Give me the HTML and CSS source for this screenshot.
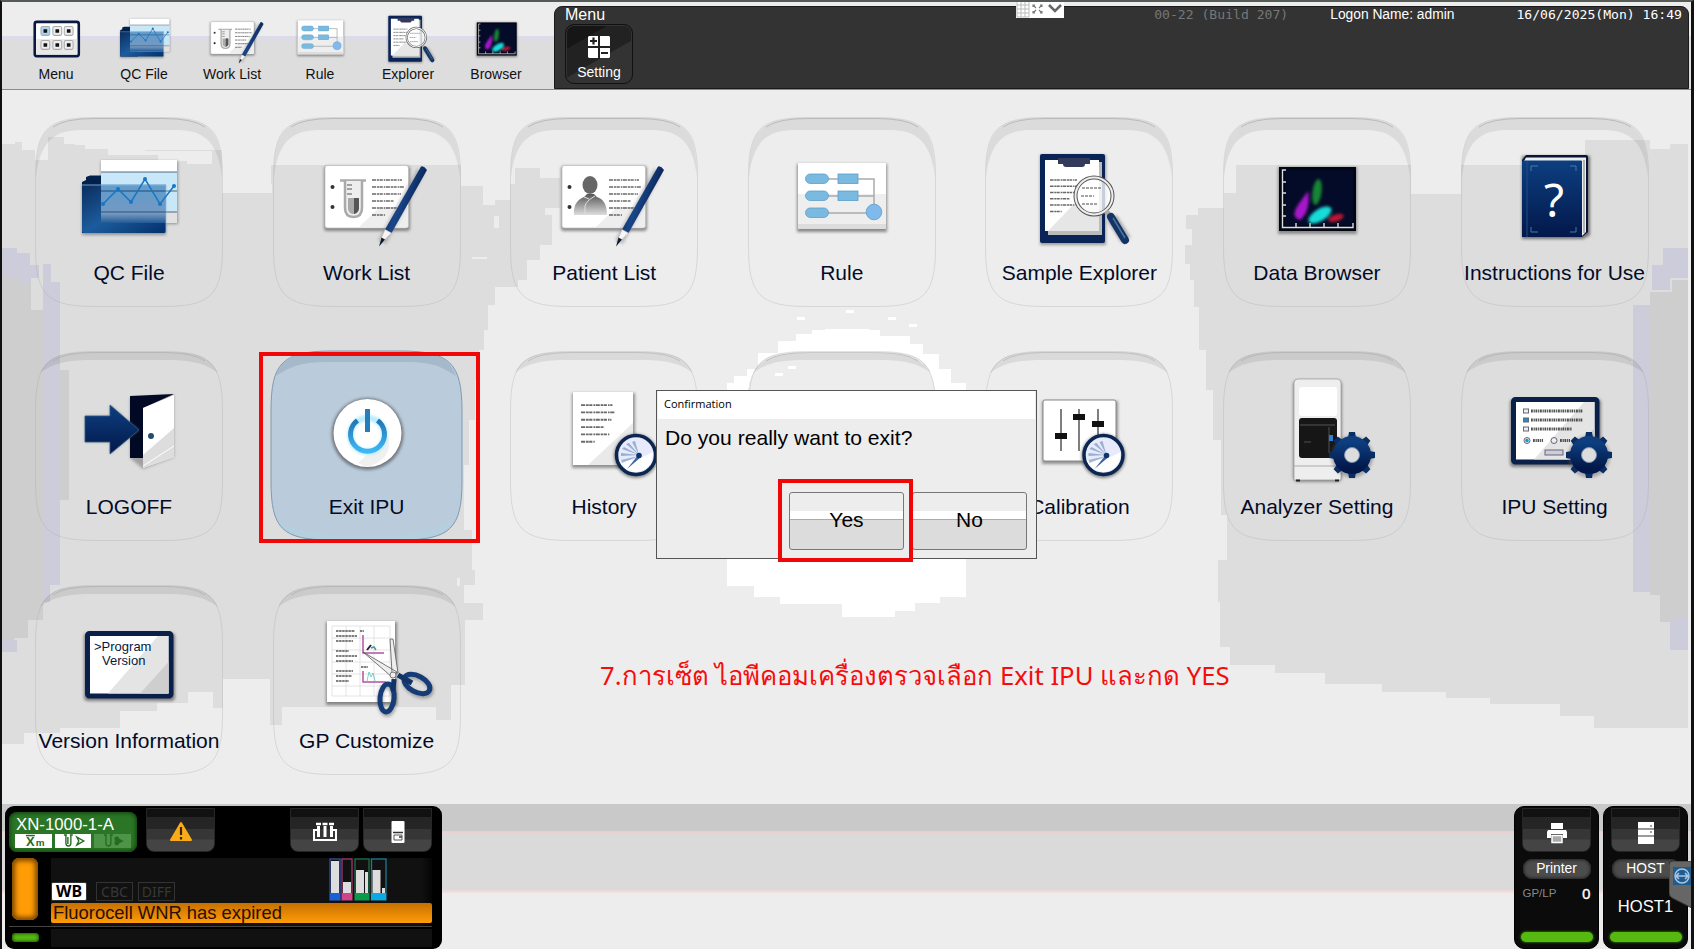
FILE: index.html
```html
<!DOCTYPE html>
<html lang="en">
<head>
<meta charset="utf-8">
<title>XN IPU Menu</title>
<link rel="stylesheet" href="styles.css">
</head>
<body>
<svg class="defs" width="0" height="0" aria-hidden="true">
  <defs>
    <linearGradient id="navy" x1="0" y1="0" x2="0" y2="1"><stop offset="0" stop-color="#0d3f80"/><stop offset="1" stop-color="#02184a"/></linearGradient>
    <linearGradient id="folder" x1="0" y1="0" x2="1" y2="1"><stop offset="0" stop-color="#0a2c5e"/><stop offset=".5" stop-color="#1c5c9c"/><stop offset="1" stop-color="#02306c"/></linearGradient>
    <linearGradient id="glass" x1="0" y1="0" x2="0" y2="1"><stop offset="0" stop-color="#3f84bd" stop-opacity=".75"/><stop offset=".75" stop-color="#6c90bb" stop-opacity=".9"/><stop offset="1" stop-color="#1f5a96"/></linearGradient>
    <linearGradient id="pen" x1="0" y1="0" x2="1" y2=".5"><stop offset="0" stop-color="#021540"/><stop offset=".5" stop-color="#1a4688"/><stop offset="1" stop-color="#021540"/></linearGradient>
    <linearGradient id="power" x1="0" y1="0" x2="0" y2="1"><stop offset="0" stop-color="#2376b4"/><stop offset="1" stop-color="#3cb8f4"/></linearGradient>
    <linearGradient id="person" x1="0" y1="0" x2="0" y2="1"><stop offset="0" stop-color="#555"/><stop offset="1" stop-color="#ddd"/></linearGradient>
    <filter id="soft" x="-60%" y="-60%" width="220%" height="220%"><feGaussianBlur stdDeviation="1.6"/></filter>
    <symbol id="band" viewBox="0 0 188 190">
      <path d="M.5 60C.5 12 12 .5 60 .5H128C176 .5 187.500 12 187.500 60V130C187.500 178 176 189.500 128 189.500H60C12 189.500 .5 178 .5 130Z" fill="none" stroke="#a8a8a8" stroke-opacity=".32"/>
      <path d="M1 60C1 12 13 1 60 1H128C175 1 187 12 187 60C183 26 170 13 142 13H46C18 13 5 26 1 60Z" fill="#000" fill-opacity=".075"/>
      <path d="M18 10Q30 1.500 60 1.500H128Q158 1.500 170 10" fill="none" stroke="#999" stroke-opacity=".5"/>
    </symbol>
    <symbol id="band-thin" viewBox="0 0 188 190">
      <path d="M.5 60C.5 12 12 .5 60 .5H128C176 .5 187.500 12 187.500 60V130C187.500 178 176 189.500 128 189.500H60C12 189.500 .5 178 .5 130Z" fill="none" stroke="#a8a8a8" stroke-opacity=".32"/>
      <path d="M5 22C14 4 28 1 60 1H128C160 1 174 4 183 22C168 11 154 9 128 9H60C34 9 20 11 5 22Z" fill="#000" fill-opacity=".08"/>
      <path d="M18 10Q30 1.500 60 1.500H128Q158 1.500 170 10" fill="none" stroke="#999" stroke-opacity=".4"/>
    </symbol>
    <symbol id="note-lines" viewBox="0 0 40 42" overflow="visible">
      <g stroke="#444" stroke-width="1.700" stroke-dasharray="4 .8 2.500 .5 3 1 1.500 .6" opacity=".8"><path d="M0 2H30M0 9H32M0 16H29M0 23H22M0 30H27M0 37H13"/></g>
    </symbol>
    <symbol id="pencil" viewBox="0 0 110 100" overflow="visible">
      <path d="M109 22L70 93" stroke="#777" stroke-opacity=".4" stroke-width="9" filter="url(#soft)"/>
      <path d="M109 17.500q3-1 6 3.500L79.500 84l-6.500-3.500z" fill="url(#pen)"/><path d="M73 80.500l6.500 3.500L69.500 94l-2-1z" fill="#f6f6f6" stroke="#aaa" stroke-width=".6"/><path d="M69.500 88.500l3.500 2L67 97.500z" fill="#101c30"/>
    </symbol>
    <symbol id="card" viewBox="0 0 110 100" overflow="visible">
      <rect x="12" y="17" width="86" height="65" rx="3" fill="#555" opacity=".65" filter="url(#soft)"/>
      <rect x="13" y="16.500" width="83.500" height="62.500" rx="2.500" fill="#fff" stroke="#bbb" stroke-width=".7"/><path d="M47 78L68 58H96V78Z" fill="#eee"/>
      <circle cx="20.500" cy="38" r="2" fill="#333"/><circle cx="20.500" cy="58" r="2" fill="#333"/>
      <use href="#note-lines" x="60" y="29" width="40" height="42"/>
    </symbol>
    <symbol id="i-work" viewBox="0 0 110 100" overflow="visible">
      <use href="#card"/><path d="M28 31.500H54" stroke="#aaa" stroke-width="2.500"/><path d="M33 32V59Q33 68 41.500 68Q50 68 50 59V32" fill="#eee" stroke="#aaa" stroke-width="2.500"/><path d="M36 49H47V60Q46 65 41.500 65Q37 65 36 60Z" fill="#aaa"/><path d="M42 49H47V60Q46 64 42 65Z" fill="#555"/><path d="M35 36h5M35 40h5M35 45h5" stroke="#555"/><use href="#pencil"/>
    </symbol>
    <symbol id="i-patient" viewBox="0 0 110 100" overflow="visible">
      <use href="#card"/><path d="M25 66Q24 52 35 48L38 45H45L48 48Q58 51 58 66Z" fill="url(#person)"/><ellipse cx="41" cy="36" rx="7.500" ry="9" fill="#666"/><path d="M36 66V57Q37 52 46 47M35 48L40 50" fill="none" stroke="#ddd"/><use href="#pencil"/>
    </symbol>
    <symbol id="i-qc" viewBox="0 0 110 100" overflow="visible">
      <path d="M27 12H104V75H92V86H8V35H27Z" fill="#555" opacity=".55" filter="url(#soft)"/>
      <path d="M8 84V33L12 31V28L16 26.500H42V84Z" fill="#02204c"/>
      <rect x="27" y="11" width="76" height="63" fill="#fff"/><rect x="27" y="23" width="76" height="40" fill="#c8e8fa"/><rect x="27" y="63" width="76" height="11" fill="#e1e1e1"/>
      <path d="M27 23H103M27 42H103M27 63H103" stroke="#345" stroke-width=".8"/>
      <rect x="27" y="35.500" width="65" height="38.500" fill="url(#glass)"/><path d="M8 35.500H27V74H92V82Q92 84 90 84H10Q8 84 8 82Z" fill="url(#folder)"/><path d="M8 36H92V83" fill="none" stroke="#8fb6d8" stroke-width=".8"/><path d="M27 42H92M27 63H92" stroke="#234d7c" stroke-width=".8"/>
      <path d="M29 55L44 40L57 53L71 30L86 55L100 37" fill="none" stroke="#1877c2" stroke-width="1.500"/>
      <g fill="#1877c2"><circle cx="29" cy="55" r="2"/><circle cx="44" cy="40" r="2"/><circle cx="57" cy="53" r="2"/><circle cx="71" cy="30" r="2"/><circle cx="86" cy="55" r="2"/><circle cx="100" cy="37" r="2"/></g>
    </symbol>
    <symbol id="i-rule" viewBox="0 0 110 100" overflow="visible">
      <rect x="10" y="15" width="90" height="68" fill="#555" opacity=".65" filter="url(#soft)"/>
      <rect x="11" y="14" width="88" height="65.500" rx="1" fill="#fff"/><path d="M11 45H99V79.500H11Z" fill="#eee"/><path d="M11 75H99V79.500H11Z" fill="#ddd"/>
      <path d="M40 30H87V60M40 47H87M40 64H80" fill="none" stroke="#aaa" stroke-width="1.500"/>
      <g fill="#7bbae0" stroke="#599fc8" stroke-width=".8"><rect x="18.500" y="25" width="23" height="9.500" rx="4.700"/><rect x="18.500" y="42" width="23" height="9.500" rx="4.700"/><rect x="18.500" y="59" width="23" height="9.500" rx="4.700"/><rect x="51" y="25" width="20" height="9.500"/><rect x="51" y="42" width="20" height="9.500"/><circle cx="87" cy="63" r="7.800" fill="#82b9ec"/></g>
    </symbol>
    <symbol id="i-explorer" viewBox="0 0 110 100" overflow="visible">
      <rect x="16" y="6" width="66" height="90" fill="#555" opacity=".55" filter="url(#soft)"/>
      <rect x="16" y="5" width="65" height="89" rx="2" fill="#0a2458"/><path d="M23 13H78V86H24Z" fill="#bbb"/><path d="M21 11H75V82H21Z" fill="#fff"/><path d="M24 82L50 55H75V82Z" fill="#e6e6e6"/>
      <path d="M34 9H66V15H61Q61 18 58 18H42Q39 18 39 15H34Z" fill="#343a5c"/><use href="#note-lines" x="26" y="28" width="36" height="40"/>
      <circle cx="70" cy="47" r="18.500" fill="#fff" fill-opacity=".78" stroke="#555" stroke-width="4"/><circle cx="70" cy="47" r="18.500" fill="none" stroke="#eee" stroke-width="2"/>
      <path d="M58 39h20M57 47h13M58 55h16" stroke="#888" stroke-width="1.400" stroke-dasharray="3 1"/>
      <path d="M82 62L88 69" stroke="#aaa" stroke-width="5"/><path d="M88 69L102 91" stroke="#666" stroke-opacity=".5" stroke-width="11" filter="url(#soft)"/><path d="M87 68L101 91" stroke="#123566" stroke-width="8" stroke-linecap="round"/><path d="M89 69L101 89" stroke="#4b719c" stroke-width="1.500"/>
    </symbol>
    <symbol id="i-browser" viewBox="0 0 110 100" overflow="visible">
      <rect x="16" y="18" width="79" height="67" fill="#555" opacity=".6" filter="url(#soft)"/>
      <rect x="17" y="18" width="77" height="64" fill="#020514"/><rect x="23" y="21" width="68" height="55" fill="#030b28"/>
      <path d="M24 21H20.500V78.500H91V74M20.500 33H24M20.500 44H24M20.500 56H24M20.500 67H24M34 78V74M48 78V74M62 78V74M76 78V74" fill="none" stroke="#ddd" stroke-width="1.400"/>
      <g filter="url(#soft)"><path d="M46 42Q49 62 38 71Q28 68 36 56Z" fill="#a812ca"/><ellipse cx="55" cy="43" rx="4.500" ry="13" fill="#128535" transform="rotate(8 55 43)"/><ellipse cx="58" cy="66" rx="13" ry="6" fill="#16dcd8" transform="rotate(-32 58 66)"/><ellipse cx="74" cy="69" rx="8" ry="3.500" fill="#bc1832" transform="rotate(-18 74 69)"/></g>
    </symbol>
    <symbol id="i-book" viewBox="0 0 110 100" overflow="visible">
      <path d="M22 7H90V86L83 90H22Z" fill="#444" opacity=".7" filter="url(#soft)"/><path d="M22 11L26 6H86Q88 6 88 8V83L82 88H22Z" fill="#071634"/><path d="M26 8.500H86V83L82 87V12H24Z" fill="#eee"/><path d="M84 11V84" stroke="#777"/><rect x="22" y="11.500" width="60" height="76.500" rx="1" fill="url(#navy)"/><path d="M27 12V88" stroke="#1c4d8c"/><path d="M31 22V17H38M70 17H76V22M31 78V83H38M70 83H76V78" fill="none" stroke="#4876ac"/>
      <text x="54" y="68" text-anchor="middle" class="book-mark">?</text>
    </symbol>
    <symbol id="i-logoff" viewBox="0 0 110 100" overflow="visible">
      <path d="M56 15L100 12V74L69 86L56 75Z" fill="#666" opacity=".5" filter="url(#soft)"/><path d="M56 13L100 11L69 25V75H56Z" fill="#020925"/><path d="M69 25L100 12V74L69 85Z" fill="#fff"/><path d="M69 72L100 45V74L69 85Z" fill="#ddd"/><path d="M69 83L100 63" stroke="#fff"/>
      <circle cx="77" cy="53" r="3" fill="#244c71"/><path d="M11 33H36V22L65 47L36 71V59H11Z" fill="#666" opacity=".6" filter="url(#soft)"/><path d="M11 33H36V22L65 47L36 71V59H11Z" fill="url(#navy)" stroke="#345a86" stroke-width=".8"/>
    </symbol>
    <symbol id="i-power" viewBox="0 0 110 100" overflow="visible">
      <circle cx="55.500" cy="51" r="36" fill="#555" opacity=".7" filter="url(#soft)"/><circle cx="55.500" cy="50" r="34" fill="#fff"/><path d="M46 80L76 53Q82 76 55 84Z" fill="#f0f0f0"/><circle cx="55.500" cy="52" r="17" fill="none" stroke="#b4edff" stroke-width="6" filter="url(#soft)"/><path d="M45.500 37.500A17 17 0 1 0 65.500 37.500" fill="none" stroke="url(#power)" stroke-width="5"/><rect x="53" y="26" width="5" height="23" fill="#287cb8"/>
    </symbol>
    <symbol id="clock" viewBox="0 0 50 50" overflow="visible">
      <circle cx="25" cy="26" r="22" fill="#444" opacity=".65" filter="url(#soft)"/><circle cx="25" cy="25" r="19.500" fill="#e7eafa" stroke="#0b2650" stroke-width="3.500"/><path d="M8 30Q25 32 42 22Q42 40 25 42Q12 41 8 30Z" fill="#fff"/>
      <g fill="#6688b8" opacity=".6"><path d="M28 25L21 12L24 11ZM28 25L15 14L18 13ZM28 25L11 19L13 17ZM28 25L10 26L10 23ZM28 26L11 33L10 30Z"/></g><path d="M28 24L16 39L30 27Z" fill="#3a63a0"/><circle cx="28" cy="25.500" r="2.800" fill="#10356c"/>
    </symbol>
    <symbol id="gear" viewBox="0 0 50 50" overflow="visible">
      <circle cx="25" cy="26.500" r="21" fill="#555" opacity=".4" filter="url(#soft)"/>
      <g fill="#0a2d64"><path id="teeth" d="M21 8L22 2H28L29 8ZM21 42L22 48H28L29 42ZM8 21L2 22V28L8 29ZM42 21L48 22V28L42 29Z"/><use href="#teeth" transform="rotate(45 25 25)"/></g>
      <circle cx="25" cy="25" r="13" fill="none" stroke="url(#navy)" stroke-width="12"/><circle cx="25" cy="25" r="7.500" fill="#ddd" stroke="#7d91ad" stroke-width="1"/>
    </symbol>
    <symbol id="i-history" viewBox="0 0 110 100" overflow="visible">
      <rect x="23" y="10" width="63" height="75" fill="#555" opacity=".6" filter="url(#soft)"/><rect x="24" y="9" width="60" height="73" fill="#fff"/><path d="M39 82L84 40V82Z" fill="#e9e9e9"/><use href="#note-lines" x="32" y="20" width="42" height="44"/><use href="#clock" x="62" y="47" width="50" height="50"/>
    </symbol>
    <symbol id="i-calib" viewBox="0 0 110 100" overflow="visible">
      <rect x="18" y="18" width="76" height="63" fill="#555" opacity=".6" filter="url(#soft)"/><rect x="19" y="17" width="73" height="61" rx="2" fill="#fff" stroke="#888"/><path d="M37 26V68M55 26V68M74 26V68" stroke="#555" stroke-width="1.500"/><path d="M31 53H43M49 34H61M68 41H80" stroke="#111" stroke-width="6"/><use href="#clock" x="54.500" y="47" width="50" height="50"/>
    </symbol>
    <symbol id="i-analyzer" viewBox="0 0 110 100" overflow="visible">
      <rect x="31" y="-3" width="49" height="102" rx="5" fill="#555" opacity=".6" filter="url(#soft)"/><path d="M32 0Q32-4 36-4H75Q79-4 79 0V97H32Z" fill="#eee" stroke="#999" stroke-width=".7"/><rect x="37" y="4" width="38" height="29" rx="3" fill="#fff"/><rect x="37" y="35" width="38" height="40" rx="3" fill="#161616"/><path d="M38 42H73" stroke="#555"/><path d="M42 59H49M67 44V70" stroke="#333" stroke-width="2"/><path d="M69 52V58" stroke="#2c80d2" stroke-width="4"/><path d="M32 83H79" stroke="#aaa"/><path d="M34 97.500H38M73 97.500H77" stroke="#222" stroke-width="2"/><use href="#gear" x="65" y="47" width="50" height="50"/>
    </symbol>
    <symbol id="screen" viewBox="0 0 110 100" overflow="visible">
      <rect x="10" y="16" width="91" height="68" rx="4" fill="#555" opacity=".7" filter="url(#soft)"/><rect x="13.500" y="16.500" width="83.500" height="62.500" rx="2" fill="#fff" stroke="#09204a" stroke-width="5"/><path d="M34 76.500L84 19H94.500V76.500Z" fill="#e4e4e4"/><path d="M66 76.500L94.500 45V76.500Z" fill="#cecece"/>
    </symbol>
    <symbol id="i-ipu" viewBox="0 0 110 100" overflow="visible">
      <use href="#screen"/><g fill="#eee" stroke="#667" stroke-width="1"><rect x="23.500" y="26" width="5" height="4"/><rect x="23.500" y="35" width="5" height="4" fill="#2b88c4"/><rect x="23.500" y="44" width="5" height="4"/><circle cx="27" cy="57.500" r="3"/><circle cx="54" cy="57.500" r="3"/><rect x="45" y="67" width="18" height="5" fill="#ccd"/></g><circle cx="27" cy="57.500" r="1.800" fill="#1597da"/><path d="M31 28H83M31 37H83M31 46H72M33 57.500H43M60 57.500H70" stroke="#333" stroke-width="3" stroke-dasharray="1.800 .8 1.200 .7" opacity=".85"/><use href="#gear" x="64" y="47" width="50" height="50"/>
    </symbol>
    <symbol id="i-version" viewBox="0 0 110 100" overflow="visible"><use href="#screen"/><text x="20" y="34" class="screen-text">&gt;Program</text><text x="28" y="48" class="screen-text">Version</text></symbol>
    <symbol id="i-gp" viewBox="0 0 110 100" overflow="visible">
      <rect x="14" y="5" width="71" height="83" fill="#555" opacity=".65" filter="url(#soft)"/><rect x="15" y="4" width="68" height="81" fill="#fff"/><path d="M20 9H78V79H20ZM20 21H78M20 33H78M20 45H78M20 57H78M20 69H78M34 9V79M48 9V79M62 9V79" fill="none" stroke="#ddd" stroke-width=".8"/>
      <path d="M24 14H43M48 14H52M24 19H45M24 24H41M24 34H37M24 39H45M24 44H41M24 54H41M24 59H40M24 64H37M49 50H56" stroke="#555" stroke-width="1.500" stroke-dasharray="2.500 .6"/><path d="M51 18V36H72M51 54V65H74" fill="none" stroke="#b650a5" stroke-width="1.500"/><path d="M55 33l4-5" stroke="#223" fill="none" stroke-width="2"/><path d="M59 31l3-1 2 3" stroke="#499" fill="none" stroke-width="1.500"/><path d="M55 64l2-9 2 5 2-4 2 8" stroke="#29b8a8" fill="none" opacity=".6"/>
      <path d="M51 35L80 60L85 55ZM78 22L80 56L86 56L81 22Z" fill="#eee" stroke="#555" stroke-width=".8"/>
      <g stroke="#444" stroke-opacity=".4" fill="none" stroke-width="6" filter="url(#soft)"><ellipse cx="106" cy="69" rx="14" ry="8" transform="rotate(28 106 69)"/><ellipse cx="75" cy="83" rx="7" ry="14"/></g>
      <ellipse cx="105" cy="67" rx="14" ry="8" transform="rotate(28 105 67)" fill="none" stroke="#163c78" stroke-width="5"/><ellipse cx="75" cy="81" rx="7" ry="14" transform="rotate(5 75 81)" fill="none" stroke="#163c78" stroke-width="5"/><path d="M86 58L100 66M82 62L81 74" stroke="#123366" stroke-width="5"/><circle cx="81" cy="58" r="3" fill="#eee" stroke="#777"/>
    </symbol>
    <symbol id="i-menu" viewBox="0 0 110 100" overflow="visible">
      <rect x="13" y="17" width="85" height="66" rx="4" fill="#fff" stroke="#0b1942" stroke-width="5"/><path d="M16 50H95V80H16Z" fill="#e8e8e8"/><g fill="#eee" stroke="#aaa" stroke-width="2"><rect x="25" y="26" width="17" height="17" rx="3" fill="#a6d5f8"/><rect x="48" y="26" width="17" height="17" rx="3"/><rect x="70" y="26" width="17" height="17" rx="3"/><rect x="25" y="53" width="17" height="17" rx="3"/><rect x="48" y="53" width="17" height="17" rx="3"/><rect x="70" y="53" width="17" height="17" rx="3"/></g><g fill="#111"><path d="M30 31h7v7h-7zM53 31h7v7h-7zM75 31h7v7h-7zM30 58h7v7h-7zM53 58h7v7h-7zM75 58h7v7h-7z"/></g>
    </symbol>
  </defs>
</svg>

<div class="app">
  <svg class="backdrop" viewBox="0 0 1694 949" shape-rendering="crispEdges" aria-hidden="true">
    <path fill="#ddd" d="M2 144H15V142H22V150H35V160H48V137H75V145H108V155H142V150H222V184H270V165H485V184H483V205H495V208H515V168H540V178H560V208H495V215H500V260H518V287H495V305H488V330H484V350H479V380H475V420H469V465H464V530H472V570H475V585H464V603H483V620H465V685H451V720H436V707H282V725H270V679H223V708H213V692H188V703H157V711H120V728H60V733H24V744H2Z"/>
    <path fill="#ddd" d="M540 168H535V190H522V208H545V215H552V245H540V260H527V280H510V260H495V200H510V184H522V168Z"/>
    <path fill="#ededed" d="M64 135H90V140H117V145H145V151H212V164H187V161H158V155H127V149H85V144H64ZM225 107H271V184H225ZM284 150H290V135H440V150H446V165H284ZM461 117H485V184H461ZM222 184H272V193H222ZM461 184H487V186H461Z"/>
    <path fill="#ddd" d="M1688 144H1670V149H1650V140H1585V158H1572V165H1461V194H1411V165H1236V193H1224V208H1198V215H1186V229H1192V245H1185V264H1190V280H1194V307H1199V350H1206V390H1213V440H1221V515H1227V560H1218V602H1220V647H1230V665H1275V673H1325V684H1382V692H1446V698H1490V704H1560V716H1594V728H1688Z"/>
    <path fill="#cecece" d="M2 278H31V310H43V570H60V585H43V620H28V638H14V650H2ZM43 370H69V500H60V550H43ZM1688 280H1672V292H1650V595H1660V622H1688Z"/>
    <path fill="#ccccdb" d="M2 248H17V253H30V265H39V278H31V284H20V278H2ZM43 264H51V282H60V585H50V602H43ZM1633 305H1650V592H1633ZM1663 248H1688V278H1670V290H1652V265H1663ZM2 640H17V652H2ZM1670 618H1688V650H1670Z"/>
    <path fill="#ddd" d="M69 365H220V530H69Z"/>
    <path fill="#fff" d="M796 334H812V330H880V336H910V344H923V354H939V369H951V383H966V597H940V603H915V611H895V617H842V604H780V597H754V586H727V383H734V376H747V369H758V353H778V341H796Z"/>
    <path fill="#ededed" d="M748 395Q748 353 800 353H885Q935 353 935 395V400H748Z"/>
    <g fill="#ededed"><path d="M472 257h15v2h-15zM494 216h5v12h-5zM457 578h3v8h-3z"/></g>
    <g fill="#fff"><path d="M846 310h8v3h-8zM797 317h8v3h-8zM888 317h8v3h-8zM909 324h8v3h-8zM825 329h44v3h-44zM788 366h8v3h-8zM775 373h8v3h-8z"/></g>
  </svg>

  <header class="topbar">
    <nav class="shortcuts">
      <a class="shortcut"><svg viewBox="0 0 110 100"><use href="#i-menu"/></svg><span>Menu</span></a>
      <a class="shortcut"><svg viewBox="0 0 110 100"><use href="#i-qc"/></svg><span>QC File</span></a>
      <a class="shortcut"><svg viewBox="0 0 110 100"><use href="#i-work"/></svg><span>Work List</span></a>
      <a class="shortcut"><svg viewBox="0 0 110 100"><use href="#i-rule"/></svg><span>Rule</span></a>
      <a class="shortcut"><svg viewBox="0 0 110 100"><use href="#i-explorer"/></svg><span>Explorer</span></a>
      <a class="shortcut"><svg viewBox="0 0 110 100"><use href="#i-browser"/></svg><span>Browser</span></a>
    </nav>
    <section class="panel">
      <div class="panel-left">
        <h1>Menu</h1>
        <button class="setting"><svg width="24" height="24" viewBox="0 0 24 24"><path fill="#fff" d="M2 1h9v10H1V2zM13 1h9l1 1v9H13zM1 13h10v10H2l-1-1zM13 13h10v9l-1 1h-9z"/><path d="M3 6h7M6.500 2.500v7M14 18h7" stroke="#222" stroke-width="2.200"/></svg><span>Setting</span></button>
      </div>
      <div class="panel-info"><span class="build">00-22 (Build 207)</span><span class="logon">Logon Name: admin</span><span class="clock">16/06/2025(Mon) 16:49</span></div>
    </section>
  </header>

  <main class="tiles">
    <a class="tile"><svg class="frame"><use href="#band"/></svg><svg class="icon" viewBox="0 0 110 100"><use href="#i-qc"/></svg><span>QC File</span></a>
    <a class="tile"><svg class="frame"><use href="#band"/></svg><svg class="icon" viewBox="0 0 110 100"><use href="#i-work"/></svg><span>Work List</span></a>
    <a class="tile"><svg class="frame"><use href="#band"/></svg><svg class="icon" viewBox="0 0 110 100"><use href="#i-patient"/></svg><span>Patient List</span></a>
    <a class="tile"><svg class="frame"><use href="#band"/></svg><svg class="icon" viewBox="0 0 110 100"><use href="#i-rule"/></svg><span>Rule</span></a>
    <a class="tile"><svg class="frame"><use href="#band"/></svg><svg class="icon" viewBox="0 0 110 100"><use href="#i-explorer"/></svg><span>Sample Explorer</span></a>
    <a class="tile"><svg class="frame"><use href="#band"/></svg><svg class="icon" viewBox="0 0 110 100"><use href="#i-browser"/></svg><span>Data Browser</span></a>
    <a class="tile"><svg class="frame"><use href="#band"/></svg><svg class="icon" viewBox="0 0 110 100"><use href="#i-book"/></svg><span>Instructions for Use</span></a>
    <a class="tile"><svg class="frame"><use href="#band-thin"/></svg><svg class="icon" viewBox="0 0 110 100"><use href="#i-logoff"/></svg><span>LOGOFF</span></a>
    <a class="tile"><svg class="frame" viewBox="0 0 188 190" overflow="visible"><path d="M-2 60C-2 12 9 0 59 0H127C177 0 189 12 189 60V130C189 178 177 189 127 189H59C9 189-2 178-2 130Z" fill="#bacbdb" stroke="#7e9ab5"/><path d="M3 25C11 3 25 1 59 1H127C159 1 175 3 183 25C164 12 153 11 127 11H59C33 11 21 13 3 25Z" fill="#a6b9ca"/><path d="M5 170Q14 187 49 188H137Q173 187 181 168Q159 182 127 184H59Q24 181 5 170Z" fill="#b4d0e0"/></svg><svg class="icon" viewBox="0 0 110 100"><use href="#i-power"/></svg><span>Exit IPU</span></a>
    <a class="tile"><svg class="frame"><use href="#band-thin"/></svg><svg class="icon" viewBox="0 0 110 100"><use href="#i-history"/></svg><span>History</span></a>
    <a class="tile"><svg class="frame"><use href="#band-thin"/></svg></a>
    <a class="tile"><svg class="frame"><use href="#band-thin"/></svg><svg class="icon" viewBox="0 0 110 100"><use href="#i-calib"/></svg><span>Calibration</span></a>
    <a class="tile"><svg class="frame"><use href="#band-thin"/></svg><svg class="icon" viewBox="0 0 110 100"><use href="#i-analyzer"/></svg><span>Analyzer Setting</span></a>
    <a class="tile"><svg class="frame"><use href="#band-thin"/></svg><svg class="icon" viewBox="0 0 110 100"><use href="#i-ipu"/></svg><span>IPU Setting</span></a>
    <a class="tile"><svg class="frame"><use href="#band-thin"/></svg><svg class="icon" viewBox="0 0 110 100"><use href="#i-version"/></svg><span>Version Information</span></a>
    <a class="tile"><svg class="frame"><use href="#band-thin"/></svg><svg class="icon" viewBox="0 0 110 100"><use href="#i-gp"/></svg><span>GP Customize</span></a>
  </main>

  <footer class="statusbar">
    <section class="analyzer">
      <div class="analyzer-top">
        <div class="device"><strong>XN-1000-1-A</strong>
          <div class="modes">
            <svg viewBox="0 0 37 14"><text x="11" y="12" class="mode-x">X</text><text x="21" y="12" class="mode-m">m</text><path d="M11 1.500h9" stroke="#276b21" stroke-width="1.500"/></svg>
            <svg viewBox="0 0 37 14"><path d="M9 1h3M15 1h3M11 1v8q0 3 2.500 3t2.500-3V1M13 3v7M22 3l7 4-7 4 2-4z" fill="none" stroke="#276b21" stroke-width="1.400"/></svg>
            <svg class="dim" viewBox="0 0 37 14"><path d="M10 1h3M16 1h3M12 1v8q0 3 2.500 3t2.500-3V1" fill="none" stroke="#276b21" stroke-width="1.400"/><circle cx="23" cy="5" r="2.500" fill="#276b21"/><circle cx="23" cy="9" r="2.500" fill="#276b21"/><path d="M24 4l6 3-6 3z" fill="#276b21"/></svg>
          </div>
        </div>
        <div class="tab warn"><svg width="24" height="22" viewBox="0 0 24 22"><path d="M12 2L22 19H2Z" fill="#fbab18" stroke="#fbab18" stroke-width="2" stroke-linejoin="round"/><path d="M12 6V14M12 16V18.500" stroke="#3a2500" stroke-width="2.200"/></svg></div>
        <div class="tab rack"><svg width="24" height="20" viewBox="0 0 24 20"><path d="M4 8H1V18H23V8H20" fill="none" stroke="#fff" stroke-width="2"/><path d="M3 2h5M9.500 2h5M16 2h5" stroke="#fff" stroke-width="2.400"/><path d="M4 4h3v11H4zM10.500 4h3v11h-3zM17 4h3v11h-3z" fill="#fff"/></svg></div>
        <div class="tab"><svg width="14" height="22" viewBox="0 0 14 22"><rect x=".5" width="13" height="22" rx="1" fill="#fff"/><path d="M2 11.500H12M8 16H11" stroke="#333" stroke-width="1.500"/><path d="M3 14H11V19H3Z" fill="none" stroke="#555"/></svg></div>
      </div>
      <div class="analyzer-body">
        <i class="lamp"></i>
        <div class="status">
          <div class="status-row"><b class="tag on">WB</b><b class="tag">CBC</b><b class="tag">DIFF</b>
            <svg class="reagents" width="58" height="43" viewBox="0 0 58 43"><g fill="#111" stroke-width="1.300"><rect x="1" y="1" width="10" height="41" stroke="#384f9c"/><rect x="13" y="1" width="10" height="41" stroke="#a4366f"/><rect x="26" y="1" width="14" height="41" stroke="#1d7044"/><rect x="42.500" y="1" width="14.500" height="41" stroke="#197c94"/></g><path fill="#ddd" d="M2 3h8v32H2zM14 24h8v11h-8zM27 12h8v23h-8zM36 14h3v21h-3zM43.500 12h8v23h-8zM53 30h3v5h-3z"/><path fill="#1762d8" d="M1 35h10v7H1z"/><path fill="#cf4388" d="M13 35h10v7H13z"/><path fill="#079c49" d="M26 35h14v7H26z"/><path fill="#0ba9e5" d="M42 35h15v7H42z"/></svg></div>
          <div class="message">Fluorocell WNR has expired</div>
        </div>
      </div>
      <div class="analyzer-foot"><i class="led"></i><div class="well"></div></div>
    </section>
    <section class="device-box">
      <div class="tab"><svg width="22" height="22" viewBox="0 0 22 22"><path fill="#fff" d="M5 1h12v6H5zM2 8h18l1 2v6h-4v-4H5v4H1v-6z"/><path d="M6 13.500h10v7H6z" fill="#aaa" stroke="#fff" stroke-width="1.500"/></svg></div>
      <div class="pill">Printer</div><div class="count"><span>GP/LP</span><b>0</b></div><i class="bar"></i>
    </section>
    <section class="device-box">
      <div class="tab"><svg width="18" height="22" viewBox="0 0 18 22"><path fill="#fff" d="M1 0h16v6.500H1zM1 7.500h16v6H1zM1 14.500h16V22H1z"/><path d="M13 4h2M13 10h2" stroke="#444"/></svg></div>
      <div class="pill">HOST</div><div class="host">HOST1</div><i class="bar"></i>
    </section>
  </footer>

  <section class="dialog"><h2>Confirmation</h2><p>Do you really want to exit?</p><div class="actions"><button>Yes</button><button>No</button></div></section>
  <div class="mark mark-exit"></div><div class="mark mark-yes"></div>
  <p class="note">7.การเซ็ต ไอพีคอมเครื่องตรวจเลือก Exit IPU และกด YES</p>
  <svg class="remote-handle" viewBox="0 0 48 18"><path fill="#fff" d="M0 0h48v18H0z"/><path d="M1 1h12v16H1zM1 5h12M1 9h12M1 13h12M5 1v16M9 1v16" fill="none" stroke="#bbb"/><path d="M17 7V5h2M24 5h2v2M17 11v2h2M24 13h2v-2M17 5l3 3M26 5l-3 3M17 13l3-3M26 13l-3-3" fill="none" stroke="#777" stroke-width="1.100"/><path d="M33 5l6 6 6-6" fill="none" stroke="#666" stroke-width="2.500"/></svg>
  <svg class="remote-tab" viewBox="0 0 23 48"><path d="M4 0H23V47L5 38Q0 36 0 32V4Q0 0 4 0Z" fill="#666" stroke="#333"/><rect x="4" y="6" width="18" height="18" fill="#1e5c90"/><circle cx="13" cy="15" r="7" fill="none" stroke="#aac6df" stroke-width="1.500"/><path d="M8 15h10M10 12l-3 3 3 3M16 12l3 3-3 3" fill="none" stroke="#aac6df" stroke-width="1.600"/></svg>
</div>
</body>
</html>
```

FILE: styles.css
```css
* { box-sizing: border-box; }
body { margin: 0; overflow: hidden; font-family: "Liberation Sans", Arial, sans-serif; color: #020b28; }
h1, h2, p { margin: 0; font-weight: normal; }
button { font: inherit; padding: 0; }
.defs { position: absolute; }
.book-mark { font: 46px "Noto Sans", sans-serif; fill: #fff; }
.screen-text { font: 13px "Liberation Sans", sans-serif; fill: #07183d; }

.app { position: relative; width: 1694px; height: 949px; background: #ededed; border: solid #111; border-width: 2px 3px 0 2px; border-top-color: #555b55; display: flex; flex-direction: column; overflow: hidden; }
.backdrop { position: absolute; left: -2px; top: -2px; width: 1694px; height: 949px; }

.topbar { position: relative; height: 88px; flex: none; display: flex; background: linear-gradient(#ededed 34px, #dddbe8 34px, #dddbe8 38px, #ddd 39px); border-bottom: 1px solid #8b8b8b; }
.shortcuts { display: flex; padding: 11px 2px 0 10px; width: 552px; flex: none; }
.shortcut { width: 88px; display: flex; flex-direction: column; align-items: center; font-size: 14px; line-height: 16px; color: #111; }
.shortcut svg { width: 57px; height: 52px; margin-bottom: 1px; overflow: visible; }
.panel { flex: 1; margin: 4px 2px 0 0; background: #333; border-radius: 8px 8px 0 0; border: 1px solid #1a1a1a; display: flex; justify-content: space-between; color: #fff; }
.panel-left { padding: 0 0 0 10px; }
.panel-left h1 { font-size: 16px; line-height: 15px; height: 17px; }
.setting { width: 68px; height: 60px; display: flex; flex-direction: column; align-items: center; padding-top: 10px; gap: 5px; background: linear-gradient(150deg, #161616 25%, #222 26%, #222 55%, #333 56%); border: 1px solid #111; border-radius: 9px; box-shadow: inset 0 0 0 1px #333; color: #fff; font-size: 14px; line-height: 16px; }
.panel-info { display: flex; padding: 0 6px 0 0; line-height: 16px; font-size: 13.8px; white-space: pre; }
.build, .clock { font: 13.1px/15px "DejaVu Sans Mono", monospace; }
.build { color: #777; margin-right: 42px; }
.logon { margin-right: 62px; }

.tiles { position: relative; flex: 1; display: grid; grid-template-columns: repeat(7, 188px); grid-auto-rows: 190px; gap: 44px 49.6px; padding: 27px 0 0 33px; }
.tile { position: relative; display: flex; flex-direction: column; align-items: center; padding-top: 32px; font-size: 21px; line-height: 24px; white-space: nowrap; }
.frame { position: absolute; left: 0; top: 0; width: 188px; height: 190px; }
.icon { position: relative; width: 110px; height: 100px; overflow: visible; margin-bottom: 12px; }
.tile span { position: relative; }

.statusbar { position: relative; flex: none; height: 145px; padding: 2px 3px 0; display: flex; gap: 4px; background: linear-gradient(#c9c9c9 27px, #e8cfcf 27px, #e8d3d3 29px, #dadada 30px, #dadada 86px, #f0d9d9 86px, #f0d9d9 88px, #ededed 89px); }
.analyzer { width: 437px; margin-right: auto; background: #000; border-radius: 9px; padding: 2px 10px 0 4px; }
.analyzer-top { display: flex; gap: 4px; height: 44px; }
.device { width: 128px; height: 40px; margin-top: 4px; padding: 4px 6px 0; border-radius: 8px; background: #2b7626; box-shadow: inset 0 0 4px 1px #103d0e; color: #fff; }
.device strong { display: block; font-weight: normal; font-size: 16.8px; line-height: 18px; padding-left: 1px; }
.modes { display: flex; gap: 3px; }
.modes svg { width: 37px; height: 14px; background: #fff; }
.modes .dim { background: #4d9449; }
.mode-x { font: bold 13px "Liberation Sans", sans-serif; fill: #276b21; }
.mode-m { font: bold 10px "Liberation Sans", sans-serif; fill: #276b21; }
.tab { width: 69px; height: 44px; padding-top: 3px; display: flex; align-items: center; justify-content: center; border-radius: 0 0 8px 8px; border: 1px solid #262626; background: linear-gradient(#111 8px, #252525 8px, #252525 20px, #363636 20px, #363636 30px, #444 31px); }
.warn { margin-left: 5px; }
.rack { margin-left: auto; }
.analyzer-body { height: 75px; padding: 6px 0 0 3px; display: flex; gap: 13px; border-bottom: 1px solid #444; }
.lamp { width: 26px; height: 62px; border-radius: 7px; background: #ff9c06; box-shadow: inset 0 0 5px 3px #7a4700; }
.status { flex: 1; background: linear-gradient(90deg, #111 370px, #050505); }
.status-row { height: 45px; display: flex; align-items: flex-end; padding-bottom: 2px; gap: 5px; position: relative; }
.tag { width: 37px; height: 19px; border: 1px solid #333; color: #383838; font: 14px/17px "Noto Sans", sans-serif; text-align: center; }
.tag.on { width: 36px; margin-right: 4px; background: #fff; color: #000; font-weight: bold; font-size: 16px; border-radius: 2px; }
.reagents { margin: 0 45px 0 auto; }
.message { height: 20px; background: linear-gradient(#c67000, #ff9c08); font-size: 18.4px; line-height: 20px; padding-left: 2px; color: #2a0e00; border-radius: 2px; }
.analyzer-foot { display: flex; gap: 12px; padding: 2px 0 0 3px; }
.led { width: 27px; height: 9px; margin-top: 4px; border-radius: 4px; background: #54b811; box-shadow: inset 0 0 3px 1px #245a04; }
.well { flex: 1; height: 18px; background: #111; }
.device-box { width: 85px; padding: 1px 8px 0; background: #0b0b0b; border: 1px solid #000; border-radius: 10px; display: flex; flex-direction: column; align-items: center; color: #fff; }
.device-box .tab { padding-top: 6px; }
.pill { width: 68px; height: 20px; margin-top: 7px; border-radius: 9px; background: #4c4c4c; box-shadow: inset 0 0 3px 1px #222; font-size: 13.8px; line-height: 20px; text-align: center; }
.count { width: 68px; height: 53px; padding-top: 2px; display: flex; justify-content: space-between; align-items: flex-start; font-size: 11.5px; line-height: 24px; color: #888; }
.count b { color: #fff; font: 15px/24px "Noto Sans", sans-serif; -webkit-text-stroke: .4px #fff; }
.host { height: 53px; line-height: 55px; font-size: 16.6px; }
.bar { width: 72px; height: 10px; border-radius: 5px; background: #56b90f; box-shadow: 0 0 2px 1px #245a04; }

.dialog { position: absolute; left: 654px; top: 388px; width: 381px; height: 169px; background: #ededed; border: 1px solid #555; color: #000; }
.dialog h2 { height: 28px; margin: 0 1px; background: #fff; font: 11px/25px "Open Sans", sans-serif; padding-left: 6px; }
.dialog p { font-size: 21.1px; line-height: 24px; padding: 7px 0 0 8px; }
.actions { display: flex; gap: 8px; justify-content: flex-end; padding: 42px 9px 0 0; }
.actions button { width: 115px; height: 58px; border: 1px solid #777; border-radius: 3px; background: linear-gradient(#ededed 18px, #fff 18px, #fff 26px, #aaa 26px, #aaa 27px, #dcdcdc 27px); font-size: 21px; line-height: 52px; padding-bottom: 2px; color: #000; }
.mark { position: absolute; border: 4px solid #f00808; }
.mark-exit { left: 257px; top: 350px; width: 221px; height: 191px; }
.mark-yes { left: 776px; top: 477px; width: 135px; height: 83px; }
.note { position: absolute; left: 598px; top: 655px; color: #f50d0d; font: 25.7px/38px "Noto Sans", sans-serif; white-space: nowrap; }
.remote-handle { position: absolute; left: 1014px; top: -2px; width: 48px; height: 18px; }
.remote-tab { position: absolute; left: 1667px; top: 859px; width: 23px; height: 48px; }
```
